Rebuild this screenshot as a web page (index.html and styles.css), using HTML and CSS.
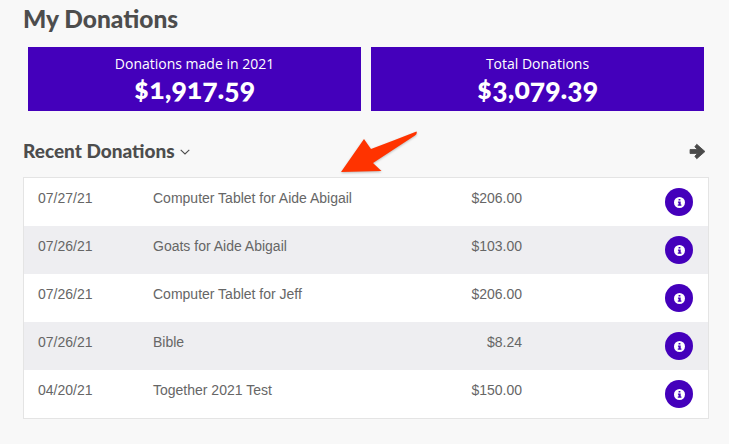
FILE: index.html
```html
<!DOCTYPE html>
<html lang="en">
<head>
<meta charset="utf-8">
<title>My Donations</title>
<link rel="stylesheet" href="styles.css">
</head>
<body>
<main class="page">
  <h1 class="title">My Donations</h1>
  <section class="cards">
    <div class="card"><div class="card-label">Donations made in 2021</div><div class="card-value">$1,917.59</div></div>
    <div class="card"><div class="card-label">Total Donations</div><div class="card-value">$3,079.39</div></div>
  </section>
  <div class="recent-head">
    <h2 class="recent-title">Recent Donations
      <svg class="chev" viewBox="0 0 10 6" width="10" height="6"><path d="M.7.8 5 5l4.300-4.200" fill="none" stroke="#4d4d4d" stroke-width="1.100"/></svg>
    </h2>
    <svg class="next" viewBox="0 0 16 16" width="17" height="17"><path d="M1 6.100h7L5.500 3.600 7.300 1.200 15 8l-7.700 6.800-1.800-2.400L8 9.900H1z" fill="#4a4a4a" stroke="#4a4a4a" stroke-width=".8" stroke-linejoin="round"/></svg>
  </div>
  <section class="table">
    <div class="row"><span class="date">07/27/21</span><span class="name">Computer Tablet for Aide Abigail</span><span class="amount">$206.00</span><span class="info"><svg viewBox="0 0 12 12" width="11" height="11"><circle cx="6" cy="6" r="6" fill="#fff"/><path d="M5 2.200h2v1.700H5zM4.300 5h3v3.300h.8v1.300H4.100V8.300h.9V6.300h-.7z" fill="#4400bb"/></svg></span></div>
    <div class="row alt"><span class="date">07/26/21</span><span class="name">Goats for Aide Abigail</span><span class="amount">$103.00</span><span class="info"><svg viewBox="0 0 12 12" width="11" height="11"><circle cx="6" cy="6" r="6" fill="#fff"/><path d="M5 2.200h2v1.700H5zM4.300 5h3v3.300h.8v1.300H4.100V8.300h.9V6.300h-.7z" fill="#4400bb"/></svg></span></div>
    <div class="row"><span class="date">07/26/21</span><span class="name">Computer Tablet for Jeff</span><span class="amount">$206.00</span><span class="info"><svg viewBox="0 0 12 12" width="11" height="11"><circle cx="6" cy="6" r="6" fill="#fff"/><path d="M5 2.200h2v1.700H5zM4.300 5h3v3.300h.8v1.300H4.100V8.300h.9V6.300h-.7z" fill="#4400bb"/></svg></span></div>
    <div class="row alt"><span class="date">07/26/21</span><span class="name">Bible</span><span class="amount">$8.24</span><span class="info"><svg viewBox="0 0 12 12" width="11" height="11"><circle cx="6" cy="6" r="6" fill="#fff"/><path d="M5 2.200h2v1.700H5zM4.300 5h3v3.300h.8v1.300H4.100V8.300h.9V6.300h-.7z" fill="#4400bb"/></svg></span></div>
    <div class="row"><span class="date">04/20/21</span><span class="name">Together 2021 Test</span><span class="amount">$150.00</span><span class="info"><svg viewBox="0 0 12 12" width="11" height="11"><circle cx="6" cy="6" r="6" fill="#fff"/><path d="M5 2.200h2v1.700H5zM4.300 5h3v3.300h.8v1.300H4.100V8.300h.9V6.300h-.7z" fill="#4400bb"/></svg></span></div>
  </section>
</main>
<svg class="arrow" viewBox="0 0 729 444" width="729" height="444"><path d="M416.500 131.500Q417.500 133.500 415 135.500L373 163 381.500 171 341 172 364 139 371 149Q395 140 416.500 131.500z" fill="#ff3300"/></svg>
</body>
</html>
```
FILE: styles.css
```css
* { box-sizing: border-box; }
html, body { margin: 0; height: 100%; }
body { background: #f8f8f8; overflow: hidden; position: relative; }
.page { padding: 0 20px 0 23px; display: flex; flex-direction: column; }
.title { margin: 0; height: 47px; padding-top: 4px; font: 900 24.500px/30px Lato, sans-serif; color: #4d4d4d; }
.cards { display: flex; gap: 10px; padding-left: 5px; padding-right: 5px; }
.card { flex: 1; height: 64px; background: #4400bb; color: #fff; text-align: center; padding-top: 7px; }
.card-label { font: 400 14px/19px "Open Sans", sans-serif; }
.card-value { font: 900 28.500px/30px Lato, sans-serif; font-variant-numeric: oldstyle-nums; }
.recent-head { display: flex; justify-content: space-between; align-items: center; height: 66px; padding-top: 13px; padding-right: 3px; }
.recent-title { margin: 0; font: 900 19px/24px Lato, sans-serif; color: #4d4d4d; display: flex; align-items: center; gap: 5px; }
.chev { margin-top: 2px; }
.next { margin-top: 2px; }
.table { width: 686px; border: 1px solid #e4e4e4; background: #fff; }
.row { height: 48px; display: flex; align-items: flex-start; background: #fff; font: 400 14px/16px "Liberation Sans", sans-serif; color: #666; padding-top: 12px; }
.row.alt { background: #eeeef1; }
.date { width: 129px; padding-left: 14px; }
.name { width: 258px; }
.amount { width: 111px; text-align: right; }
.info { margin-left: 143px; margin-top: -2px; width: 28px; height: 28px; border-radius: 50%; background: #4400bb; display: flex; align-items: center; justify-content: center; }
.arrow { position: absolute; left: 0; top: 0; pointer-events: none; filter: drop-shadow(0 1px 1px rgba(0,0,0,.25)); }
```
